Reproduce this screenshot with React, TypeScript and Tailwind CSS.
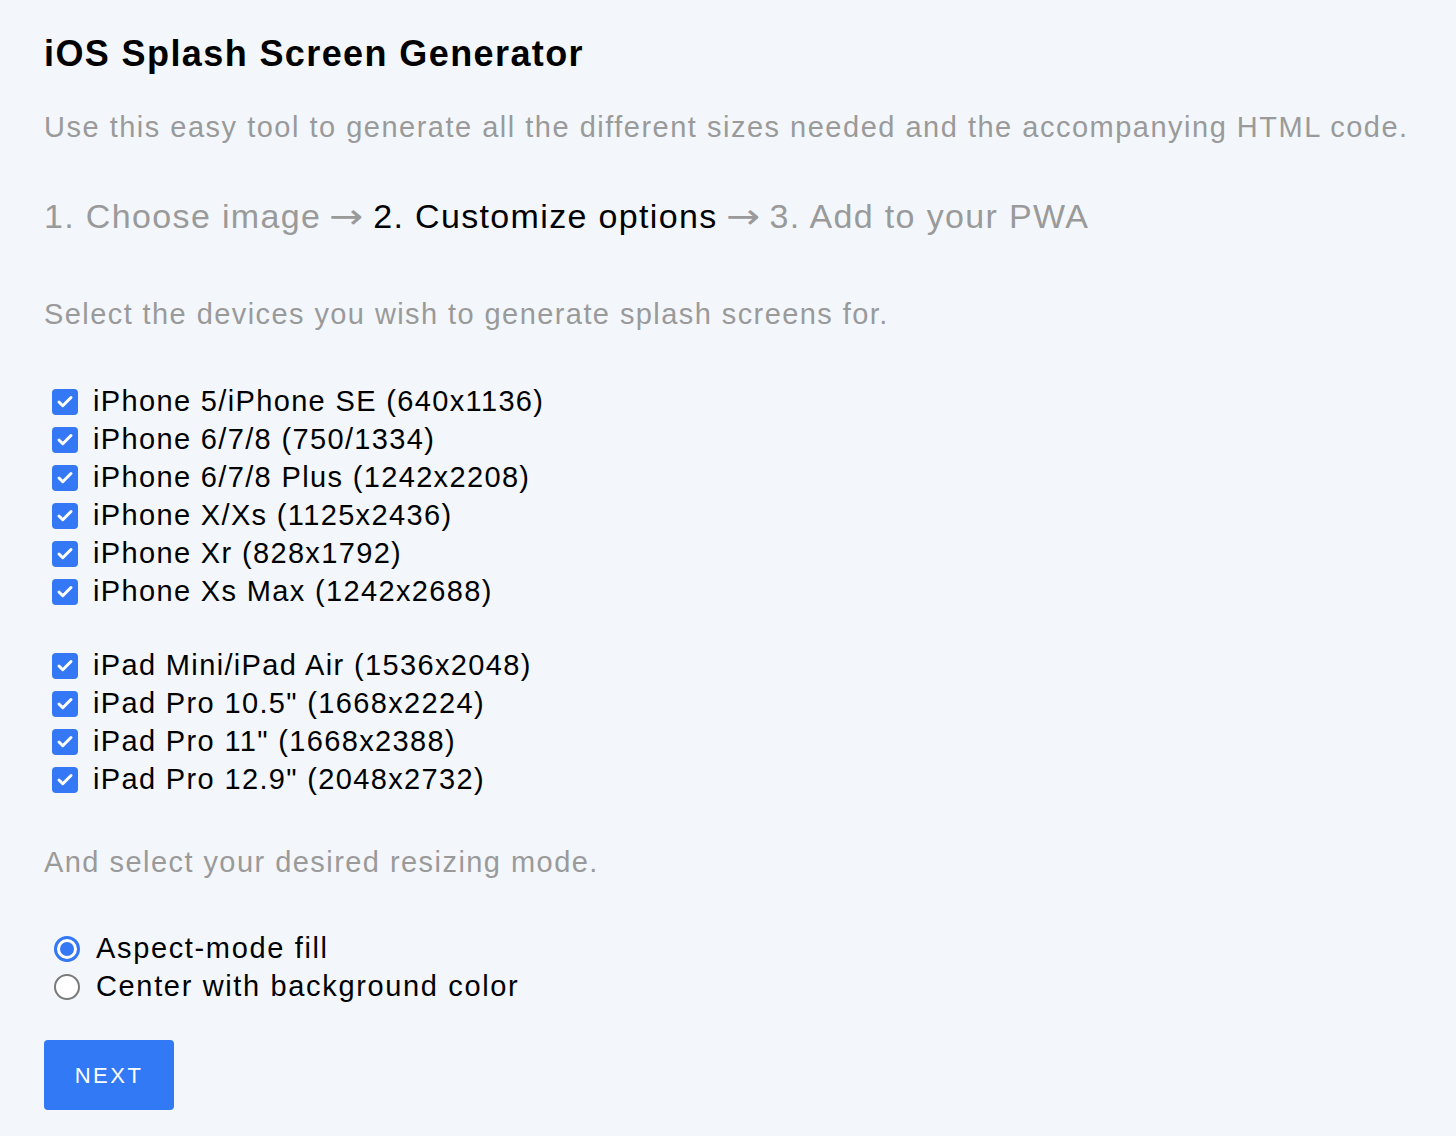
import { Check } from 'lucide-react'

const iphones = [
  'iPhone 5/iPhone SE (640x1136)',
  'iPhone 6/7/8 (750/1334)',
  'iPhone 6/7/8 Plus (1242x2208)',
  'iPhone X/Xs (1125x2436)',
  'iPhone Xr (828x1792)',
  'iPhone Xs Max (1242x2688)',
]

const ipads = [
  'iPad Mini/iPad Air (1536x2048)',
  'iPad Pro 10.5" (1668x2224)',
  'iPad Pro 11" (1668x2388)',
  'iPad Pro 12.9" (2048x2732)',
]

const DeviceRow = ({ label }: { label: string }) => (
  <label className="flex items-center h-[38px]">
    <span className="ml-2 flex h-[26px] w-[26px] items-center justify-center rounded-[4px] bg-[#3478f6]">
      <Check className="h-[18px] w-[18px] text-white" strokeWidth={4} />
    </span>
    <span className="ml-[15px] text-[29px] tracking-[1.35px] text-black">{label}</span>
  </label>
)

const Radio = ({ label, checked }: { label: string; checked?: boolean }) => (
  <label className="flex items-center h-[38px]">
    {checked ? (
      <span className="ml-[10px] flex h-[26px] w-[26px] items-center justify-center rounded-full border-[3px] border-[#3478f6] bg-white">
        <span className="h-[14px] w-[14px] rounded-full bg-[#3478f6]" />
      </span>
    ) : (
      <span className="ml-[10px] h-[26px] w-[26px] rounded-full border-2 border-[#7a7a7a] bg-white" />
    )}
    <span className="ml-[16px] text-[29px] tracking-[1.65px] text-black">{label}</span>
  </label>
)

const Arrow = () => (
  <span className="mx-[11px] inline-block scale-x-[1.2] font-['DejaVu_Sans',sans-serif] text-[#9a9a9a]">→</span>
)

export default function App() {
  return (
    <div className="min-h-[1136px] bg-[#f3f7fb] px-[44px] pt-[30px] font-['Liberation_Sans',Arial,sans-serif]">
      <h1 className="text-[36px] font-semibold leading-[48px] tracking-[1.4px] text-black">iOS Splash Screen Generator</h1>
      <p className="mt-[29px] text-[29px] leading-[40px] tracking-[1.5px] text-[#9a9a9a]">
        Use this easy tool to generate all the different sizes needed and the accompanying HTML code.
      </p>
      <p className="mt-[47px] text-[34px] leading-[44px] tracking-[1.35px] text-[#9a9a9a]">
        1. Choose image<Arrow />
        <span className="text-black">2. Customize options</span>
        <Arrow />3. Add to your PWA
      </p>
      <p className="mt-[56px] text-[29px] leading-[40px] tracking-[1.42px] text-[#9a9a9a]">
        Select the devices you wish to generate splash screens for.
      </p>

      <div className="mt-[49px] flex flex-col">
        {iphones.map((d) => (
          <DeviceRow key={d} label={d} />
        ))}
      </div>
      <div className="mt-[36px] flex flex-col">
        {ipads.map((d) => (
          <DeviceRow key={d} label={d} />
        ))}
      </div>

      <p className="mt-[43px] text-[29px] leading-[40px] tracking-[1.45px] text-[#9a9a9a]">
        And select your desired resizing mode.
      </p>

      <div className="mt-[48px] flex flex-col">
        <Radio label="Aspect-mode fill" checked />
        <Radio label="Center with background color" />
      </div>

      <button className="mt-[34px] h-[70px] w-[130px] rounded-[4px] bg-[#3179f5] text-[22px] tracking-[2.5px] text-white">
        NEXT
      </button>
    </div>
  )
}
